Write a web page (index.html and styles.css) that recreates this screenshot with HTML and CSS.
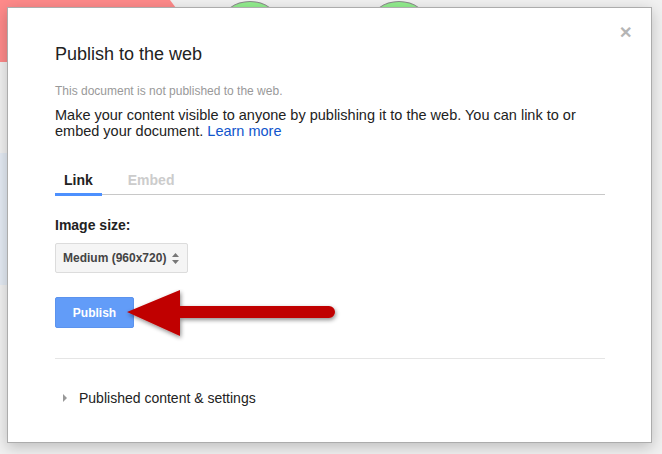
FILE: index.html
```html
<!DOCTYPE html>
<html lang="en">
<head>
    <meta charset="UTF-8">
    <title>Publish to the web</title>
    <link rel="stylesheet" href="styles.css">
</head>
<body>
    <div class="backdrop">
        <div class="shape-red"></div>
        <div class="shape-green one"></div>
        <div class="shape-green two"></div>
        <div class="shape-blue"></div>
    </div>

    <div class="dialog">
        <span class="close">&#x2715;</span>
        <h1>Publish to the web</h1>
        <p class="status">This document is not published to the web.</p>
        <p class="intro">Make your content visible to anyone by publishing it to the web. You can link to or embed your document. <a href="#">Learn more</a></p>

        <div class="tabs">
            <span class="tab active">Link</span>
            <span class="tab">Embed</span>
        </div>

        <div class="label">Image size:</div>
        <div class="select">
            <span>Medium (960x720)</span>
            <svg class="updown" width="7" height="11" viewBox="0 0 7 11">
                <path d="M3.5 0 L7 4 L0 4 Z" fill="#777"/>
                <path d="M3.5 11 L7 7 L0 7 Z" fill="#777"/>
            </svg>
        </div>

        <div class="actions">
            <button class="publish">Publish</button>
            <!-- annotation arrow drawn over the dialog -->
            <svg class="arrow" width="220" height="60" viewBox="0 0 220 60">
                <defs>
                    <filter id="drop" x="-10%" y="-20%" width="130%" height="150%">
                        <feDropShadow dx="1" dy="2" stdDeviation="2" flood-color="#000" flood-opacity="0.45"/>
                    </filter>
                </defs>
                <g filter="url(#drop)" fill="#c00000">
                    <path d="M2 23 L55 1 L55 17 L204 17 A6 6 0 0 1 204 29 L55 29 L55 47 Z"/>
                </g>
            </svg>
        </div>

        <div class="divider"></div>

        <div class="details">
            <span class="caret"></span>
            Published content &amp; settings
        </div>
    </div>
</body>
</html>
```

FILE: styles.css
```css
body {
    margin: 0;
    padding: 7px 10px 0 7px;
    background: #f1f1f1;
    font-family: 'Liberation Sans', Arial, sans-serif;
    color: #222;
    position: relative;
    height: 447px;
    overflow: hidden;
}
.backdrop .shape-red {
    position: absolute;
    left: 0;
    top: 0;
    width: 176px;
    height: 62px;
    background: #fe8a8a;
    clip-path: polygon(0 0, 170px 0, 176px 8px, 176px 100%, 0 100%);
}
.backdrop .shape-green {
    position: absolute;
    top: 1px;
    width: 54px;
    height: 40px;
    border-radius: 50%;
    background: #92ee8e;
    border: 1px solid #8a8a8a;
}
.shape-green.one { left: 222px; }
.shape-green.two { left: 371px; }
.backdrop .shape-blue {
    position: absolute;
    left: 0;
    top: 153px;
    width: 8px;
    height: 132px;
    background: #e4ebf4;
}
.dialog {
    position: relative;
    width: 550px;
    height: 398px;
    padding: 34px 46px 2px 47px;
    background: #fff;
    border: 1px solid #acacac;
    box-shadow: 0 4px 14px rgba(0, 0, 0, 0.22);
}
.close {
    position: absolute;
    right: 19px;
    top: 15px;
    font-size: 16px;
    font-weight: bold;
    color: #b5b5b5;
}
h1 {
    font-size: 18px;
    font-weight: normal;
    color: #222;
    margin: 0;
    line-height: 24px;
}
.status {
    font-size: 12px;
    color: #999;
    margin: 17px 0 0;
    line-height: 16px;
}
.intro {
    font-size: 14.5px;
    color: #222;
    line-height: 16px;
    margin: 8px 0 0;
    max-width: 525px;
}
.intro a {
    color: #1155cc;
    text-decoration: none;
}
.tabs {
    margin-top: 32px;
    border-bottom: 1px solid #c8c8c8;
    display: flex;
    height: 23px;
}
.tab {
    font-size: 14px;
    font-weight: bold;
    color: #ccc;
    padding: 0 9px;
    line-height: 18px;
    margin-right: 17px;
}
.tab.active {
    color: #222;
    border-bottom: 3px solid #4d90fe;
    margin-bottom: -2px;
}
.label {
    font-size: 14px;
    font-weight: bold;
    margin-top: 21px;
    line-height: 18px;
}
.select {
    margin-top: 9px;
    height: 28px;
    border: 1px solid #dcdcdc;
    border-radius: 2px;
    background: #f5f5f5;
    display: flex;
    align-items: center;
    padding-left: 7px;
    width: 124px;
    gap: 6px;
    font-size: 12px;
    font-weight: bold;
    color: #444;
}
.actions {
    position: relative;
    margin-top: 24px;
    height: 31px;
}
.publish {
    width: 79px;
    height: 31px;
    background: #629cf8;
    border: 1px solid #5b93ee;
    border-radius: 2px;
    color: #fff;
    font-family: 'Liberation Sans', Arial, sans-serif;
    font-size: 12px;
    font-weight: bold;
}
.arrow {
    position: absolute;
    left: 70px;
    top: -8px;
}
.divider {
    margin-top: 30px;
    border-top: 1px solid #e5e5e5;
}
.details {
    margin-top: 30px;
    font-size: 14px;
    line-height: 18px;
    display: flex;
    align-items: center;
    color: #222;
}
.caret {
    width: 0;
    height: 0;
    border-left: 4px solid #999;
    border-top: 4px solid transparent;
    border-bottom: 4px solid transparent;
    margin: 0 12px 0 8px;
}
```
